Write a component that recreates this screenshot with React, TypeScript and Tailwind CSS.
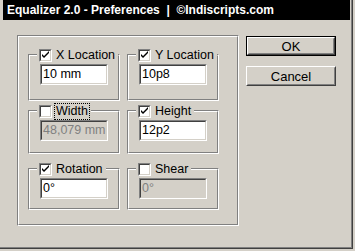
import React from 'react';

const face = 'bg-[#d4d0c8]';

function Check({ checked }: { checked: boolean }) {
  return (
    <div className="w-[13px] h-[13px] shrink-0 border border-t-[#808080] border-l-[#808080] border-r-white border-b-white">
      <div className="w-full h-full bg-white border border-t-[#404040] border-l-[#404040] border-r-[#d4d0c8] border-b-[#d4d0c8] flex items-center justify-center">
        {checked && (
          <svg width="9" height="9" viewBox="0 0 9 9">
            <path d="M1 3 L1 5 L3 7 L8 2 L8 0 L3 5 Z" fill="#000" />
          </svg>
        )}
      </div>
    </div>
  );
}

function Field({ value, disabled }: { value: string; disabled?: boolean }) {
  return (
    <div className="w-[68px] h-[21px] border border-t-[#808080] border-l-[#808080] border-r-white border-b-white">
      <div
        className={`w-full h-full overflow-hidden whitespace-nowrap border border-t-[#404040] border-l-[#404040] border-r-[#d4d0c8] border-b-[#d4d0c8] pl-[1px] flex items-center text-[12.5px] leading-none ${
          disabled ? 'bg-[#d4d0c8] text-[#808080]' : 'bg-white text-black'
        }`}
      >
        {value}
      </div>
    </div>
  );
}

function Group({
  label,
  checked,
  value,
  disabled,
  focused,
  height,
}: {
  label: string;
  checked: boolean;
  value: string;
  disabled?: boolean;
  focused?: boolean;
  height: string;
}) {
  return (
    <div className={`relative w-[92px] ${height} border border-t-[#808080] border-l-[#808080] border-r-white border-b-white`}>
      <div className="w-full h-full border border-t-white border-l-white border-r-[#808080] border-b-[#808080] pt-[8px] pl-[10px]">
        <Field value={value} disabled={disabled} />
      </div>
      {/* legend with checkbox, sits over the top edge */}
      <div className={`absolute left-[8px] top-[-7px] flex items-center gap-[3px] px-[2px] whitespace-nowrap ${face}`}>
        <Check checked={checked} />
        <span
          className={`text-[12.5px] leading-[15px] text-black px-[1px] ${
            focused ? 'outline outline-1 outline-dotted outline-black' : ''
          }`}
        >
          {label}
        </span>
      </div>
    </div>
  );
}

function Button({ children, isDefault }: { children: React.ReactNode; isDefault?: boolean }) {
  const body = (
    <div className="w-full h-full border border-t-white border-l-white border-r-[#404040] border-b-[#404040]">
      <div className="w-full h-full border border-t-[#d4d0c8] border-l-[#d4d0c8] border-r-[#808080] border-b-[#808080] flex items-center justify-center text-[13px] text-black leading-none">
        {children}
      </div>
    </div>
  );
  return isDefault ? (
    <div className="w-[90px] h-[20px] border border-black">{body}</div>
  ) : (
    <div className="w-[90px] h-[20px]">{body}</div>
  );
}

export default function App() {
  return (
    <div
      className={`w-[355px] h-[251px] ${face} overflow-hidden`}
      style={{ fontFamily: '"Liberation Sans", Arial, sans-serif' }}
    >
      <div className="w-[353px] h-[249px] border-r border-b border-r-[#404040] border-b-[#404040]">
        <div className="w-full h-full border-r border-b border-r-[#808080] border-b-[#808080]">
          {/* title bar */}
          <div className="ml-[3px] w-[347px] h-[20px] bg-black text-white font-bold text-[12px] pl-[4px] flex items-center whitespace-pre">
            Equalizer 2.0 - Preferences  |  ©Indiscripts.com
          </div>

          <div className="flex pt-[15px] pl-[17px]">
            {/* outer group */}
            <div className="w-[222px] h-[191px] border border-t-[#808080] border-l-[#808080] border-r-white border-b-white">
              <div className="w-full h-full border border-t-white border-l-white border-r-[#808080] border-b-[#808080] pt-[17px] pl-[9px] flex flex-col">
                <div className="flex gap-[7px]">
                  <Group label="X Location" checked value="10 mm" height="h-[47px]" />
                  <Group label="Y Location" checked value="10p8" height="h-[47px]" />
                </div>
                <div className="flex gap-[7px] mt-[9px]">
                  <Group label="Width" checked={false} value="48,079 mm" disabled focused height="h-[44px]" />
                  <Group label="Height" checked value="12p2" height="h-[44px]" />
                </div>
                <div className="flex gap-[7px] mt-[14px]">
                  <Group label="Rotation" checked value="0°" height="h-[42px]" />
                  <Group label="Shear" checked={false} value="0°" disabled height="h-[42px]" />
                </div>
              </div>
            </div>

            {/* buttons */}
            <div className="ml-[7px] pt-[1px] flex flex-col gap-[10px]">
              <Button isDefault>OK</Button>
              <Button>Cancel</Button>
            </div>
          </div>
        </div>
      </div>
    </div>
  );
}
